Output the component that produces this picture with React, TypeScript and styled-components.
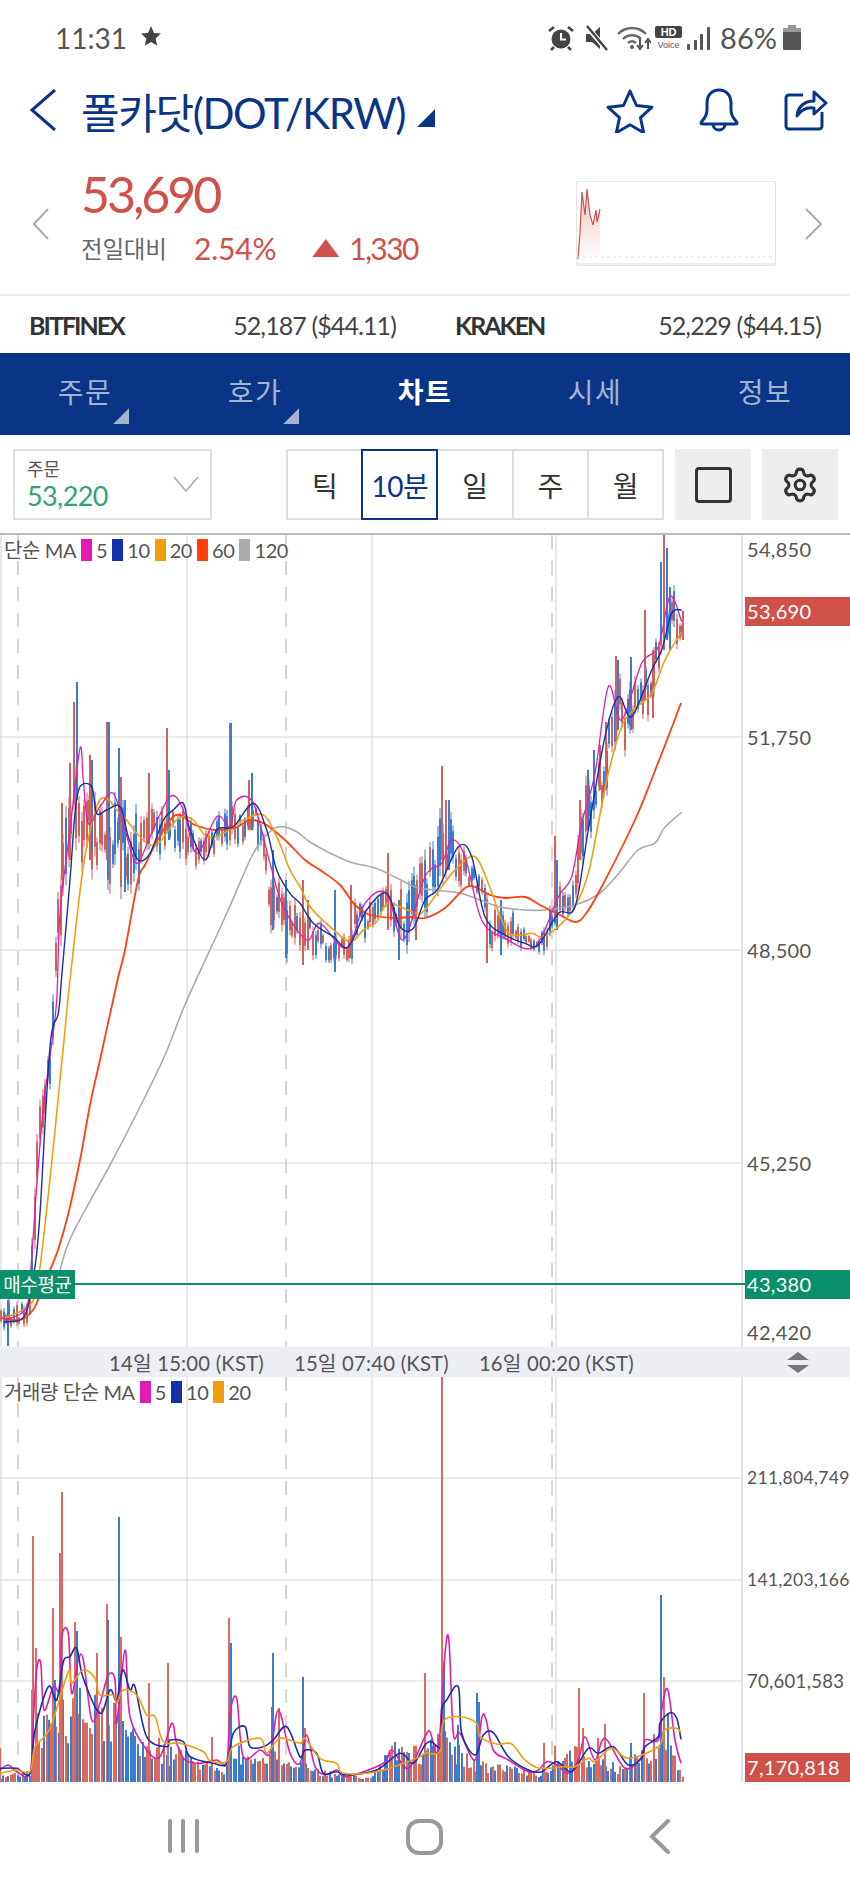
import styled, { createGlobalStyle } from 'styled-components';
import { Settings } from 'lucide-react';

const NAVY = '#0a3587';
const RED = '#d0504a';
const GREEN = '#0a8f6b';
const FONT = `Lato, "Noto Sans CJK KR", sans-serif`;

const MA5 = '#e01cb4';
const MA10 = '#1530a8';
const MA20 = '#f09f0c';
const MA60 = '#ff3f0c';
const MA120 = '#aaaaaa';
const CANDLE_RED = '#cf625c';
const CANDLE_BLUE = '#3a7ccf';

type Pt = [number, number];

// 고정 시드 난수 (렌더마다 같은 차트)
function makeRandom(seed: number) {
  let s = seed;
  return () => {
    s = (s * 1664525 + 1013904223) % 4294967296;
    return s / 4294967296;
  };
}

function lerp(table: number[][], x: number, col: number) {
  for (let i = 1; i < table.length; i++) {
    if (x <= table[i][0]) {
      const a = table[i - 1];
      const b = table[i];
      const t = (x - a[0]) / (b[0] - a[0] || 1);
      return a[col] + (b[col] - a[col]) * t;
    }
  }
  return table[table.length - 1][col];
}

function smooth(points: Pt[]) {
  let d = `M${points[0][0]} ${points[0][1]}`;
  for (let i = 0; i < points.length - 1; i++) {
    const p0 = points[i - 1] || points[i];
    const p1 = points[i];
    const p2 = points[i + 1];
    const p3 = points[i + 2] || p2;
    const c1x = p1[0] + (p2[0] - p0[0]) / 6;
    const c1y = p1[1] + (p2[1] - p0[1]) / 6;
    const c2x = p2[0] - (p3[0] - p1[0]) / 6;
    const c2y = p2[1] - (p3[1] - p1[1]) / 6;
    d += ` C${c1x.toFixed(1)} ${c1y.toFixed(1)} ${c2x.toFixed(1)} ${c2y.toFixed(1)} ${p2[0].toFixed(1)} ${p2[1].toFixed(1)}`;
  }
  return d;
}

// 확대 캡처에서 읽은 좌표를 전체 화면 좌표로 변환
const crop = (ox: number, oy: number, list: number[][]): Pt[] => list.map(([x, y]) => [ox + x / 3, oy + y / 3]);

const PRICE_ENV = [
  [0, 1305, 1335], [30, 1300, 1325], [33, 1190, 1290], [37, 1120, 1190], [45, 1080, 1130], [51, 1025, 1080],
  [54, 950, 1010], [60, 860, 950], [65, 800, 900], [72, 770, 860], [80, 770, 870], [90, 780, 870], [97, 810, 870],
  [110, 800, 880], [120, 790, 880], [128, 810, 890], [137, 820, 890], [150, 810, 860], [165, 800, 850],
  [180, 805, 855], [195, 830, 870], [205, 840, 870], [212, 815, 860], [230, 800, 850], [245, 810, 840],
  [255, 800, 830], [262, 820, 870], [270, 860, 920], [285, 880, 950], [305, 905, 950], [335, 940, 965],
  [350, 930, 960], [355, 900, 950], [370, 900, 930], [388, 880, 920], [400, 890, 950], [420, 860, 930],
  [435, 820, 900], [445, 810, 880], [460, 840, 880], [470, 860, 890], [482, 870, 900], [490, 910, 950],
  [510, 910, 945], [520, 925, 950], [535, 940, 955], [550, 905, 945], [558, 880, 920], [570, 890, 920],
  [578, 830, 900], [585, 790, 860], [595, 760, 830], [605, 740, 800], [612, 700, 770], [618, 670, 740],
  [625, 690, 750], [640, 680, 730], [650, 650, 710], [660, 610, 680], [667, 590, 650], [672, 590, 640], [682, 615, 640],
];

const PRICE_SPIKES: [number, number, number, string][] = [
  [8, 1300, 1346, 'b'], [77, 682, 800, 'b'], [74, 702, 800, 'r'], [62, 803, 880, 'r'], [70, 763, 860, 'r'], [90, 755, 860, 'r'],
  [92, 760, 850, 'b'], [107, 722, 860, 'r'], [109, 722, 840, 'b'], [119, 748, 840, 'b'], [125, 800, 892, 'b'],
  [121, 777, 870, 'r'], [149, 773, 840, 'r'], [167, 728, 830, 'r'], [169, 770, 840, 'b'], [230, 723, 840, 'r'],
  [231, 723, 820, 'b'], [252, 773, 830, 'b'], [249, 780, 830, 'r'], [273, 850, 930, 'b'], [286, 880, 958, 'b'],
  [303, 880, 965, 'r'], [308, 900, 950, 'r'], [335, 890, 972, 'b'], [351, 885, 958, 'r'], [388, 853, 930, 'r'],
  [399, 900, 960, 'b'], [416, 885, 940, 'r'], [442, 766, 860, 'r'], [446, 800, 870, 'r'], [449, 800, 870, 'b'],
  [487, 900, 963, 'r'], [501, 900, 955, 'b'], [555, 836, 920, 'r'], [557, 860, 930, 'b'], [580, 800, 860, 'r'],
  [588, 770, 830, 'b'], [594, 750, 810, 'b'], [600, 745, 790, 'r'], [625, 720, 750, 'r'], [631, 657, 730, 'b'],
  [645, 610, 700, 'r'], [653, 650, 718, 'r'], [661, 562, 640, 'b'], [664, 535, 650, 'r'], [667, 548, 640, 'b'],
  [670, 587, 650, 'b'], [683, 611, 640, 'r'], [606, 722, 790, 'r'], [616, 656, 740, 'r'], [618, 660, 730, 'b'],
];

const VOLUME_ENV = [
  [0, 1775], [30, 1772], [33, 1720], [60, 1705], [75, 1695], [120, 1712], [165, 1745], [225, 1770], [230, 1745],
  [265, 1760], [275, 1750], [315, 1770], [370, 1778], [385, 1750], [400, 1745], [425, 1750], [445, 1730], [470, 1760],
  [540, 1772], [575, 1750], [620, 1765], [640, 1750], [665, 1730], [676, 1760], [682, 1775],
];

const VOLUME_SPIKES: [number, number, string][] = [
  [0, 1748, 'r'], [33, 1536, 'r'], [36, 1648, 'r'], [32, 1690, 'r'], [53, 1608, 'r'], [62, 1492, 'r'], [60, 1553, 'r'],
  [55, 1680, 'b'], [75, 1622, 'r'], [77, 1631, 'b'], [97, 1653, 'r'], [107, 1604, 'r'], [108, 1620, 'b'], [119, 1517, 'b'],
  [121, 1637, 'r'], [149, 1683, 'r'], [168, 1663, 'r'], [212, 1737, 'r'], [229, 1618, 'r'], [231, 1643, 'b'], [273, 1653, 'b'],
  [272, 1707, 'b'], [279, 1708, 'r'], [303, 1677, 'b'], [305, 1728, 'r'], [425, 1673, 'r'], [442, 1377, 'r'], [444, 1663, 'b'],
  [458, 1725, 'b'], [477, 1693, 'b'], [479, 1702, 'b'], [544, 1743, 'r'], [555, 1746, 'r'], [579, 1688, 'r'], [583, 1728, 'r'],
  [605, 1724, 'r'], [598, 1738, 'r'], [631, 1743, 'b'], [644, 1693, 'r'], [661, 1595, 'b'], [664, 1677, 'r'], [668, 1713, 'b'],
];

type Candle = { x: number; hi: number; lo: number; top: number; bottom: number; color: string };

function buildCandles() {
  const rand = makeRandom(77);
  const list: Candle[] = [];
  for (let x = 1; x < 683; x += 2.6) {
    const envHi = lerp(PRICE_ENV, x, 1);
    const envLo = lerp(PRICE_ENV, x, 2);
    const range = envLo - envHi;
    const center = (envHi + envLo) / 2 + (rand() - 0.5) * range * 0.55;
    const half = range * (0.14 + rand() * 0.34);
    list.push({
      x: Math.round(x),
      hi: center - half,
      lo: center + half,
      top: center - half * 0.7,
      bottom: center + half * 0.7,
      color: rand() > 0.5 ? CANDLE_RED : CANDLE_BLUE,
    });
  }
  return list;
}

function buildVolume() {
  const rand = makeRandom(2021);
  const list: { x: number; top: number; color: string }[] = [];
  for (let x = 1; x < 683; x += 2.4) {
    const env = lerp(VOLUME_ENV, x, 1);
    list.push({
      x: Math.round(x),
      top: 1782 - (1782 - env) * (0.45 + rand() * 0.7),
      color: rand() > 0.5 ? '#d96a5e' : CANDLE_BLUE,
    });
  }
  return list;
}

const CANDLES = buildCandles();
const VOLUME = buildVolume();

const PRICE_MA: { color: string; width: number; points: Pt[] }[] = [
  {
    color: MA120,
    width: 1.6,
    points: [
      [60, 1270], [72, 1235], [110, 1165], [137, 1113], [165, 1055], [187, 1000], [226, 915], [250, 860], [262, 840],
      [275, 828], [285, 827], [297, 832], [310, 842], [330, 853], [350, 862], [375, 868], [395, 877], [415, 887],
      [433, 890], [460, 893], [480, 900], [500, 907], [525, 910], [545, 910], [575, 905], [600, 893], [620, 872],
      [638, 850], [655, 843], [665, 827], [682, 812],
    ],
  },
  {
    color: MA60,
    width: 1.8,
    points: [
      [2, 1318], [20, 1320], [33, 1310], [40, 1295], [50, 1270], [58, 1250], [68, 1215], [80, 1160], [90, 1105], [100, 1060],
      [118, 978], [125, 950], [138, 880], [145, 865], [155, 845], [170, 820], [180, 815], [195, 825], [215, 830], [235, 828],
      [250, 820], [265, 824], [285, 840], [305, 860], [320, 870], [340, 885], [355, 905], [370, 915], [395, 918], [410, 917],
      [425, 918], [445, 908], [465, 888], [475, 887], [490, 895], [505, 898], [525, 897], [540, 905], [560, 915], [575, 922],
      [585, 915], [600, 890], [635, 820], [658, 763], [672, 727], [681, 703],
    ],
  },
  {
    color: MA20,
    width: 1.6,
    points: [
      [5, 1318], [30, 1305], [38, 1280], [45, 1225], [52, 1160], [58, 1100], [65, 1030], [70, 980],
      ...crop(0, 530, [
        [250, 1010], [290, 830], [320, 805], [350, 840], [380, 870], [410, 910], [450, 945], [480, 935], [520, 880], [545, 860],
        [580, 870], [620, 920], [670, 910], [730, 870], [790, 855], [830, 920], [870, 1020], [900, 1070], [930, 1130], [990, 1190],
        [1050, 1235], [1090, 1200], [1130, 1175], [1160, 1120], [1200, 1130], [1250, 1150],
      ]),
      ...crop(425, 530, [
        [0, 1140], [50, 1070], [100, 1010], [150, 980], [190, 1060], [230, 1170], [260, 1215], [320, 1210], [350, 1220],
        [400, 1190], [450, 1130], [490, 1030], [520, 880], [550, 730], [590, 590], [630, 535], [680, 490], [720, 390], [770, 305],
      ]),
    ],
  },
  {
    color: MA5,
    width: 1.3,
    points: [
      [4, 1320], [25, 1310],
      ...crop(0, 980, [[90, 900], [110, 620], [130, 380], [150, 230], [170, 60]]),
      ...crop(0, 530, [
        [180, 1150], [210, 900], [240, 655], [250, 750], [265, 880], [300, 830], [340, 790], [375, 900], [410, 1000], [450, 920],
        [510, 800], [550, 840], [590, 970], [650, 860], [690, 890], [710, 810], [760, 820], [810, 1000], [850, 1130], [920, 1230],
        [960, 1180], [1040, 1255], [1095, 1120], [1160, 1090], [1210, 1230],
      ]),
      ...crop(425, 530, [
        [0, 1040], [50, 1000], [80, 930], [120, 980], [170, 1170], [240, 1225], [330, 1250], [400, 1100], [440, 1040], [470, 880],
        [510, 730], [550, 470], [590, 570], [650, 400], [700, 350], [735, 200], [770, 275],
      ]),
    ],
  },
  {
    color: MA10,
    width: 1.4,
    points: [
      [4, 1322], [25, 1315],
      ...crop(0, 980, [[105, 860], [120, 700], [150, 200], [175, 100]]),
      ...crop(0, 530, [
        [185, 1340], [210, 1050], [225, 850], [240, 770], [275, 770], [290, 850], [320, 840], [360, 830], [385, 920], [415, 990],
        [450, 970], [490, 870], [520, 840], [550, 820], [570, 900], [615, 990], [650, 900], [700, 890], [760, 820], [800, 900],
        [830, 1020], [870, 1090], [900, 1120], [940, 1180], [1000, 1220], [1045, 1250], [1100, 1140], [1160, 1090], [1200, 1190], [1240, 1195],
      ]),
      ...crop(425, 530, [
        [0, 1110], [40, 1075], [100, 950], [140, 980], [180, 1160], [240, 1215], [300, 1240], [340, 1245], [400, 1150], [450, 1130],
        [490, 900], [540, 620], [580, 500], [620, 560], [680, 420], [710, 360], [740, 250], [770, 240],
      ]),
    ],
  },
];

const VOLUME_MA: { color: string; points: Pt[] }[] = [
  {
    color: MA5,
    points: [
      ...crop(0, 1370, [
        [0, 1200], [25, 1185], [50, 1205], [90, 1210], [100, 1050], [110, 900], [122, 878], [132, 1020], [160, 950], [180, 960],
        [185, 800], [205, 790], [215, 970], [235, 870], [250, 870], [275, 1050], [300, 1000], [325, 915], [345, 930], [350, 1060],
        [375, 840], [390, 1040], [440, 1140], [480, 1160], [515, 1060], [530, 1120], [555, 1170], [600, 1180], [650, 1170], [680, 1180],
        [690, 1030], [710, 985], [730, 1160], [780, 1140], [810, 1150], [835, 1020], [870, 1150], [900, 1180], [920, 1095], [945, 1190],
        [975, 1215], [1010, 1200], [1040, 1220], [1150, 1180], [1175, 1140], [1225, 1195],
      ]),
      ...crop(425, 1370, [
        [0, 1100], [15, 1085], [40, 1140], [60, 850], [72, 815], [85, 1090], [105, 1090], [150, 1170], [170, 1045], [182, 1045],
        [205, 1140], [250, 1170], [310, 1205], [340, 1200], [365, 1175], [395, 1185], [430, 1210], [460, 1170], [480, 1100], [510, 1170],
        [540, 1105], [600, 1195], [650, 1160], [660, 1110], [700, 1110], [710, 1020], [728, 958], [750, 1110], [768, 1180],
      ]),
    ],
  },
  {
    color: MA10,
    points: [
      ...crop(0, 1370, [
        [0, 1195], [50, 1195], [90, 1210], [105, 1080], [145, 950], [170, 990], [190, 875], [210, 860], [230, 835], [250, 925],
        [300, 1030], [330, 960], [350, 990], [368, 900], [390, 960], [405, 950], [440, 1100], [500, 1130], [510, 1110], [550, 1115],
        [570, 1160], [640, 1180], [680, 1180], [700, 1090], [735, 1070], [750, 1130], [790, 1130], [820, 1110], [860, 1070], [900, 1160],
        [915, 1140], [950, 1150], [970, 1210], [1010, 1205], [1040, 1215], [1130, 1200], [1200, 1150], [1240, 1180],
      ]),
      ...crop(425, 1370, [
        [0, 1125], [20, 1115], [48, 1130], [50, 1020], [65, 990], [100, 950], [110, 1090], [150, 1155], [175, 1095], [205, 1088],
        [250, 1160], [310, 1200], [350, 1205], [395, 1175], [440, 1205], [490, 1135], [520, 1150], [565, 1130], [610, 1185], [650, 1165],
        [660, 1130], [700, 1100], [705, 1060], [735, 1028], [755, 1045], [768, 1108],
      ]),
    ],
  },
  {
    color: MA20,
    points: [
      ...crop(0, 1370, [
        [0, 1210], [50, 1200], [90, 1205], [105, 1130], [150, 1075], [205, 905], [215, 940], [250, 900], [285, 925], [300, 975],
        [340, 975], [350, 1000], [370, 960], [410, 975], [440, 1035], [465, 1040], [490, 1115], [540, 1120], [610, 1145], [630, 1172],
        [680, 1175], [700, 1130], [780, 1105], [800, 1150], [840, 1105], [900, 1120], [915, 1105], [960, 1165], [1010, 1180], [1030, 1210],
        [1130, 1205], [1250, 1165],
      ]),
      ...crop(425, 1370, [
        [0, 1150], [45, 1145], [55, 1055], [105, 1040], [155, 1060], [165, 1100], [215, 1122], [260, 1122], [300, 1170], [345, 1195],
        [420, 1190], [450, 1190], [490, 1165], [510, 1175], [560, 1135], [610, 1165], [700, 1130], [720, 1080], [755, 1075], [768, 1088],
      ]),
    ],
  },
];

const GlobalStyle = createGlobalStyle`
  html, body {
    margin: 0;
    padding: 0;
    background: #fff;
  }
  * {
    box-sizing: border-box;
  }
`;

const Page = styled.div`
  width: 850px;
  height: 1889px;
  overflow: hidden;
  background: #fff;
  display: flex;
  flex-direction: column;
  font-family: ${FONT};
`;

const StatusBar = styled.div`
  height: 62px;
  padding: 13px 49px 0 55px;
  display: flex;
  align-items: center;
  justify-content: space-between;
  color: #555;
`;

const StatusGroup = styled.div`
  display: flex;
  align-items: center;
`;

const Clock = styled.span`
  font-size: 28px;
  width: 85px;
  color: #555;
`;

const HdBadge = styled.div`
  width: 27px;
  margin: 0 5px 0 4px;
  display: flex;
  flex-direction: column;
  align-items: center;
  gap: 2px;
`;

const HdText = styled.span`
  width: 27px;
  height: 12px;
  line-height: 12px;
  border-radius: 2px;
  background: #444;
  color: #fff;
  font: bold 11px 'Liberation Sans', sans-serif;
  text-align: center;
`;

const VoiceText = styled.span`
  font: 9px/10px 'Liberation Sans', sans-serif;
  color: #555;
`;

const Battery = styled.span`
  font-size: 29px;
  margin: 0 6px 0 10px;
  color: #555;
`;

const Header = styled.header`
  height: 90px;
  padding: 6px 22px 0 29px;
  display: flex;
  align-items: center;
`;

const Title = styled.h1`
  margin: 0 0 0 24px;
  font-size: 42px;
  font-weight: 400;
  color: ${NAVY};
  letter-spacing: -1.4px;
  white-space: nowrap;
`;

const TitleMark = styled.span`
  width: 18px;
  height: 18px;
  margin: 16px 0 0 12px;
  background: ${NAVY};
  clip-path: polygon(100% 0, 100% 100%, 0 100%);
`;

const HeaderActions = styled.div`
  margin-left: auto;
  display: flex;
  align-items: center;
  gap: 43px;
`;

const PriceRow = styled.section`
  height: 144px;
  padding: 28px 28px 0 33px;
  display: flex;
  align-items: flex-start;
  border-bottom: 2px solid #eee;
`;

const PriceChevron = styled.svg`
  margin-top: 28px;
  flex: none;
`;

const PriceCol = styled.div`
  margin-left: 32px;
  display: flex;
  flex-direction: column;
`;

const BigPrice = styled.div`
  font-size: 50px;
  line-height: 52px;
  margin-top: -12px;
  color: ${RED};
  letter-spacing: -3px;
`;

const ChangeRow = styled.div`
  display: flex;
  align-items: center;
  margin-top: 10px;
`;

const ChangeLabel = styled.span`
  width: 113px;
  font-size: 23.5px;
  color: #666;
  letter-spacing: -0.2px;
`;

const ChangeValue = styled.span<{ $tight?: boolean }>`
  font-size: 30px;
  line-height: 36px;
  color: ${RED};
  letter-spacing: ${(p) => (p.$tight ? -1.6 : -0.2)}px;
`;

const UpMark = styled.span`
  width: 27px;
  height: 18px;
  margin: 0 10px 0 36px;
  background: ${RED};
  clip-path: polygon(50% 0, 100% 100%, 0 100%);
`;

const Spark = styled.svg`
  margin: 1px 29px 0 auto;
  flex: none;
  border: 1px solid #e6e6e6;
`;

const ExchangeRow = styled.section`
  height: 57px;
  padding: 0 29px;
  display: grid;
  grid-template-columns: 367px 366px;
  column-gap: 59px;
  align-items: center;
`;

const ExchangeCell = styled.div`
  display: flex;
  justify-content: space-between;
  align-items: center;
`;

const ExchangeName = styled.span`
  font-size: 25px;
  font-weight: 700;
  color: #333;
  letter-spacing: -2px;
`;

const ExchangeValue = styled.span`
  font-size: 25px;
  color: #444;
  letter-spacing: -0.9px;
`;

const Tabs = styled.nav`
  height: 82px;
  background: ${NAVY};
  display: grid;
  grid-template-columns: repeat(5, 1fr);
  justify-items: center;
  align-items: center;
`;

const Tab = styled.span<{ $active?: boolean; $menu?: boolean }>`
  position: relative;
  top: -3px;
  font-size: 28px;
  font-weight: ${(p) => (p.$active ? 700 : 400)};
  color: ${(p) => (p.$active ? '#fff' : '#a3b3d6')};
  letter-spacing: 1.5px;
  &::after {
    content: '';
    display: ${(p) => (p.$menu ? 'block' : 'none')};
    position: absolute;
    right: -17px;
    bottom: -13px;
    width: 16px;
    height: 16px;
    background: #a3b3d6;
    clip-path: polygon(100% 0, 100% 100%, 0 100%);
  }
`;

const Toolbar = styled.section`
  height: 98px;
  padding: 14px 12px 0 13px;
  display: flex;
  align-items: flex-start;
`;

const OrderSelect = styled.div`
  position: relative;
  width: 199px;
  height: 71px;
  padding: 6px 12px;
  border: 2px solid #ddd;
  display: flex;
  flex-direction: column;
`;

const OrderLabel = styled.span`
  font-size: 18px;
  line-height: 24px;
  color: #555;
`;

const OrderPrice = styled.span`
  font-size: 27px;
  line-height: 30px;
  color: #2fa37c;
  letter-spacing: -0.6px;
`;

const OrderChevron = styled.svg`
  position: absolute;
  right: 11px;
  top: 25px;
`;

const PeriodGroup = styled.div`
  width: 376px;
  height: 71px;
  margin-left: 76px;
  display: grid;
  grid-template-columns: repeat(5, 1fr);
`;

const PeriodButton = styled.div<{ $active?: boolean }>`
  margin-left: -2px;
  border: 2px solid ${(p) => (p.$active ? NAVY : '#ddd')};
  position: relative;
  z-index: ${(p) => (p.$active ? 1 : 0)};
  display: flex;
  align-items: center;
  justify-content: center;
  font-size: 28px;
  color: ${(p) => (p.$active ? NAVY : '#333')};
  letter-spacing: -0.5px;
`;

const ToolButton = styled.div`
  width: 76px;
  height: 71px;
  margin-left: 11px;
  background: #eee;
  display: flex;
  align-items: center;
  justify-content: center;
`;

const SquareIcon = styled.span`
  width: 37px;
  height: 36px;
  border: 3px solid #333;
  border-radius: 4px;
`;

const ChartPanel = styled.section`
  position: relative;
  height: 814px;
  border-top: 2px solid #bbb;
`;

const VolumePanel = styled.section`
  position: relative;
  height: 405px;
`;

const ChartSvg = styled.svg`
  display: block;
`;

const Legend = styled.div`
  position: absolute;
  left: 4px;
  top: 3px;
  display: flex;
  align-items: center;
  gap: 4px;
  font-size: 20px;
  line-height: 24px;
  color: #555;
  letter-spacing: -0.4px;
`;

const LegendSwatch = styled.span<{ $color: string }>`
  width: 11px;
  height: 22px;
  margin-left: 1px;
  background: ${(p) => p.$color};
`;

const AxisLabel = styled.span<{ $y: number; $size?: number }>`
  position: absolute;
  left: 747px;
  top: ${(p) => p.$y - 14}px;
  line-height: 28px;
  font-size: ${(p) => p.$size || 20}px;
  color: #555;
  white-space: nowrap;
  letter-spacing: 0.3px;
`;

const ValueTag = styled.span<{ $y: number; $bg: string }>`
  position: absolute;
  left: 745px;
  right: 0;
  top: ${(p) => p.$y}px;
  height: 29px;
  padding-left: 2px;
  line-height: 29px;
  font-size: 20px;
  background: ${(p) => p.$bg};
  color: #fff;
  letter-spacing: 0.3px;
`;

const AvgTag = styled.span`
  position: absolute;
  left: 0;
  top: 735px;
  width: 75px;
  height: 29px;
  line-height: 29px;
  text-align: center;
  font-size: 19px;
  letter-spacing: -0.4px;
  background: ${GREEN};
  color: #fff;
  white-space: nowrap;
`;

const TimeAxis = styled.div`
  position: relative;
  height: 30px;
  background: #eceef3;
  display: flex;
  align-items: center;
  font-size: 20.3px;
  color: #555;
  padding-left: 109px;
  gap: 30px;
  letter-spacing: 0.2px;
`;

const SortIcon = styled.svg`
  position: absolute;
  left: 786px;
  top: 5px;
`;

const BottomNav = styled.footer`
  flex: 1;
  padding: 37px 180px 0 168px;
  display: flex;
  justify-content: space-between;
  align-items: flex-start;
`;

function AlarmIcon() {
  return (
    <svg width="28" height="26" viewBox="0 0 28 26" fill="none">
      <circle cx="14" cy="14" r="9.5" fill="#444" />
      <path d="M14 8v6.5h5" stroke="#fff" strokeWidth="2" />
      <path d="M2 6l5-4M26 6l-5-4M7 22l-3 3M21 22l3 3" stroke="#444" strokeWidth="2.6" />
    </svg>
  );
}

function MuteIcon() {
  return (
    <svg width="24" height="26" viewBox="0 0 24 26" fill="none" style={{ marginLeft: 10 }}>
      <path d="M1 9h6l8-7v22l-8-7H1z" fill="#444" />
      <path d="M2 2l20 23" stroke="#fff" strokeWidth="5" />
      <path d="M2 1l20 24" stroke="#444" strokeWidth="2.4" />
    </svg>
  );
}

function WifiIcon() {
  return (
    <svg width="34" height="26" viewBox="0 0 34 26" fill="none" style={{ marginLeft: 8 }}>
      <path d="M1 9c8-8 20-8 28 0" stroke="#666" strokeWidth="2.4" />
      <path d="M6 14c5-5 13-5 18 0" stroke="#666" strokeWidth="2.4" />
      <path d="M11 18c2.500-2.200 5.500-2.200 8 0" stroke="#666" strokeWidth="2.400" />
      <circle cx="15" cy="22" r="2" fill="#555" />
      <path d="M23 14v9m-3-3l3 4 3-4" stroke="#555" strokeWidth="2" />
      <path d="M31 24v-9m-3 3l3-4 3 4" stroke="#555" strokeWidth="2" />
    </svg>
  );
}

function SignalIcon() {
  return (
    <svg width="23" height="24" viewBox="0 0 23 24" fill="#555">
      <rect x="0" y="18" width="3" height="6" rx="1" />
      <rect x="7" y="14" width="3" height="10" rx="1" />
      <rect x="13" y="8" width="3" height="16" rx="1" />
      <rect x="20" y="1" width="3" height="23" rx="1" />
    </svg>
  );
}

function BatteryIcon() {
  return (
    <svg width="18" height="25" viewBox="0 0 18 25">
      <rect x="5" y="0" width="8" height="4" fill="#999" />
      <rect x="0" y="3" width="18" height="5" rx="1" fill="#999" />
      <rect x="0" y="7" width="18" height="18" rx="1" fill="#555" />
    </svg>
  );
}

function StarBlack() {
  return (
    <svg width="22" height="20" viewBox="0 0 22 20" fill="#444" style={{ marginTop: -4 }}>
      <path d="M11 0l3 7 7 .6-5.400 4.800 1.700 7.300L11 16l-6.300 3.700 1.700-7.300L1 7.600 8 7z" />
    </svg>
  );
}

function Chevron({ dir, size, color, weight }: { dir: 'l' | 'r'; size: [number, number]; color: string; weight: number }) {
  const [w, h] = size;
  const d = dir === 'l' ? `M${w - 1} 1L1 ${h / 2}L${w - 1} ${h - 1}` : `M1 1L${w - 1} ${h / 2}L1 ${h - 1}`;
  return (
    <PriceChevron width={w} height={h} viewBox={`0 0 ${w} ${h}`} fill="none">
      <path d={d} stroke={color} strokeWidth={weight} />
    </PriceChevron>
  );
}

function StarOutline() {
  return (
    <svg width="48" height="45" viewBox="0 0 48 45" fill="none">
      <path
        d="M24 3l6.500 14.500 15.500 1.700-11.500 10.500 3.200 15-13.700-7.900-13.700 7.900 3.200-15L2 19.200l15.500-1.700z"
        stroke={NAVY}
        strokeWidth="3"
        strokeLinejoin="round"
      />
    </svg>
  );
}

function BellOutline() {
  return (
    <svg width="44" height="44" viewBox="0 0 42 44" fill="none">
      <path
        d="M3 35c0-2 6-5 6-13v-7C9 7 14 2 21 2s12 5 12 13v7c0 8 6 11 6 13 0 1-1 1-2 1H5c-1 0-2 0-2-1z"
        stroke={NAVY}
        strokeWidth="3"
        strokeLinejoin="round"
      />
      <path d="M15 36c0 8 12 8 12 0" stroke={NAVY} strokeWidth="3" />
    </svg>
  );
}

function ShareOutline() {
  return (
    <svg width="44" height="42" viewBox="0 0 44 42" fill="none">
      <path d="M19 6H5a3 3 0 0 0-3 3v28a3 3 0 0 0 3 3h30a3 3 0 0 0 3-3V23" stroke={NAVY} strokeWidth="3" />
      <path d="M13 27c1-10 8-15 17-15V3l12 11-12 11v-6c-7-1-13 2-17 8z" stroke={NAVY} strokeWidth="3" strokeLinejoin="round" />
    </svg>
  );
}

function MiniChart() {
  const pts: Pt[] = [[1, 77], [3, 50], [5, 10], [8, 33], [10, 7], [13, 33], [16, 43], [19, 28], [20, 40], [23, 27]];
  const line = pts.map((p) => p.join(',')).join(' ');
  return (
    <Spark width="200" height="85" viewBox="0 0 198 83">
      <defs>
        <linearGradient id="sparkFill" x1="0" y1="0" x2="0" y2="1">
          <stop offset="0" stopColor={RED} stopOpacity="0.35" />
          <stop offset="1" stopColor={RED} stopOpacity="0" />
        </linearGradient>
      </defs>
      <polygon points={`${line} 23,74 1,74`} fill="url(#sparkFill)" />
      <polyline points={line} fill="none" stroke={RED} strokeWidth="1.2" />
      <line x1="0" y1="75" x2="198" y2="75" stroke="#ddd" strokeWidth="1" strokeDasharray="3 3" />
      <line x1="0" y1="82" x2="198" y2="82" stroke="#eee" strokeWidth="2" />
    </Spark>
  );
}

function GridLines({ rows, bottom, top }: { rows: number[]; bottom: number; top: number }) {
  return (
    <>
      {rows.map((y) => (
        <line key={y} x1="0" x2="742" y1={y} y2={y} stroke="#e4e4e4" strokeWidth="1.4" />
      ))}
      {[187, 372, 556].map((x) => (
        <line key={x} x1={x} x2={x} y1={top} y2={bottom} stroke="#d8d8d8" strokeWidth="1.2" />
      ))}
      {[18, 286, 552].map((x) => (
        <line key={x} x1={x} x2={x} y1={top} y2={bottom} stroke="#d6d6d6" strokeWidth="2" strokeDasharray="14 12" />
      ))}
      <line x1="1" x2="1" y1={top} y2={bottom} stroke="#d8d8d8" strokeWidth="1.2" />
      <line x1="742" x2="742" y1={top} y2={bottom} stroke="#d8d8d8" strokeWidth="1.4" />
    </>
  );
}

function PriceChart() {
  return (
    <ChartSvg width="850" height="812" viewBox="0 535 850 812">
      <GridLines rows={[737, 950, 1163]} top={535} bottom={1347} />
      {CANDLES.map((c) => (
        <g key={c.x} stroke={c.color}>
          <line x1={c.x} x2={c.x} y1={c.hi} y2={c.lo} strokeWidth="1" />
          <line x1={c.x} x2={c.x} y1={c.top} y2={c.bottom} strokeWidth="2" />
        </g>
      ))}
      {PRICE_SPIKES.map(([x, top, bottom, kind]) => (
        <line key={`${x}-${top}`} x1={x} x2={x} y1={top} y2={bottom} stroke={kind === 'r' ? CANDLE_RED : CANDLE_BLUE} strokeWidth="2" />
      ))}
      {PRICE_MA.map((m) => (
        <path key={m.color} d={smooth(m.points)} fill="none" stroke={m.color} strokeWidth={m.width} />
      ))}
      <line x1="0" x2="745" y1="1284" y2="1284" stroke={GREEN} strokeWidth="1.8" />
    </ChartSvg>
  );
}

function VolumeChart() {
  return (
    <ChartSvg width="850" height="405" viewBox="0 1377 850 405">
      <GridLines rows={[1478, 1580, 1681]} top={1377} bottom={1782} />
      {VOLUME.map((b) => (
        <line key={b.x} x1={b.x} x2={b.x} y1={b.top} y2="1782" stroke={b.color} strokeWidth="2" />
      ))}
      {VOLUME_SPIKES.map(([x, top, kind]) => (
        <line key={`${x}-${top}`} x1={x} x2={x} y1={top} y2="1782" stroke={kind === 'r' ? '#dc6a60' : CANDLE_BLUE} strokeWidth="2" />
      ))}
      {VOLUME_MA.map((m) => (
        <path key={m.color} d={smooth(m.points)} fill="none" stroke={m.color} strokeWidth="1.6" />
      ))}
    </ChartSvg>
  );
}

export default function App() {
  return (
    <Page>
      <GlobalStyle />
      <StatusBar>
        <StatusGroup>
          <Clock>11:31</Clock>
          <StarBlack />
        </StatusGroup>
        <StatusGroup>
          <AlarmIcon />
          <MuteIcon />
          <WifiIcon />
          <HdBadge>
            <HdText>HD</HdText>
            <VoiceText>Voice</VoiceText>
          </HdBadge>
          <SignalIcon />
          <Battery>86%</Battery>
          <BatteryIcon />
        </StatusGroup>
      </StatusBar>

      <Header>
        <svg width="28" height="44" viewBox="0 0 28 44" fill="none">
          <path d="M26 2L3 22l23 20" stroke={NAVY} strokeWidth="3" />
        </svg>
        <Title>폴카닷(DOT/KRW)</Title>
        <TitleMark />
        <HeaderActions>
          <StarOutline />
          <BellOutline />
          <ShareOutline />
        </HeaderActions>
      </Header>

      <PriceRow>
        <Chevron dir="l" size={[16, 32]} color="#aaa" weight={2} />
        <PriceCol>
          <BigPrice>53,690</BigPrice>
          <ChangeRow>
            <ChangeLabel>전일대비</ChangeLabel>
            <ChangeValue>2.54%</ChangeValue>
            <UpMark />
            <ChangeValue $tight>1,330</ChangeValue>
          </ChangeRow>
        </PriceCol>
        <MiniChart />
        <Chevron dir="r" size={[17, 32]} color="#aaa" weight={2} />
      </PriceRow>

      <ExchangeRow>
        <ExchangeCell>
          <ExchangeName>BITFINEX</ExchangeName>
          <ExchangeValue>52,187 ($44.11)</ExchangeValue>
        </ExchangeCell>
        <ExchangeCell>
          <ExchangeName>KRAKEN</ExchangeName>
          <ExchangeValue>52,229 ($44.15)</ExchangeValue>
        </ExchangeCell>
      </ExchangeRow>

      <Tabs>
        <Tab $menu>주문</Tab>
        <Tab $menu>호가</Tab>
        <Tab $active>차트</Tab>
        <Tab>시세</Tab>
        <Tab>정보</Tab>
      </Tabs>

      <Toolbar>
        <OrderSelect>
          <OrderLabel>주문</OrderLabel>
          <OrderPrice>53,220</OrderPrice>
          <OrderChevron width="26" height="16" viewBox="0 0 26 16" fill="none">
            <path d="M1 1l12 14L25 1" stroke="#aaa" strokeWidth="1.6" />
          </OrderChevron>
        </OrderSelect>
        <PeriodGroup>
          <PeriodButton>틱</PeriodButton>
          <PeriodButton $active>10분</PeriodButton>
          <PeriodButton>일</PeriodButton>
          <PeriodButton>주</PeriodButton>
          <PeriodButton>월</PeriodButton>
        </PeriodGroup>
        <ToolButton>
          <SquareIcon />
        </ToolButton>
        <ToolButton>
          <Settings size={38} color="#333" strokeWidth={2} />
        </ToolButton>
      </Toolbar>

      <ChartPanel>
        <PriceChart />
        <Legend>
          단순 MA
          <LegendSwatch $color={MA5} />5
          <LegendSwatch $color={MA10} />10
          <LegendSwatch $color={MA20} />20
          <LegendSwatch $color={MA60} />60
          <LegendSwatch $color={MA120} />120
        </Legend>
        <AxisLabel $y={14}>54,850</AxisLabel>
        <ValueTag $y={62} $bg={RED}>53,690</ValueTag>
        <AxisLabel $y={202}>51,750</AxisLabel>
        <AxisLabel $y={415}>48,500</AxisLabel>
        <AxisLabel $y={628}>45,250</AxisLabel>
        <AvgTag>매수평균</AvgTag>
        <ValueTag $y={735} $bg={GREEN}>43,380</ValueTag>
        <AxisLabel $y={797}>42,420</AxisLabel>
      </ChartPanel>

      <TimeAxis>
        <span>14일 15:00 (KST)</span>
        <span>15일 07:40 (KST)</span>
        <span>16일 00:20 (KST)</span>
        <SortIcon width="24" height="22" viewBox="0 0 24 22" fill="#777">
          <path d="M12 0l11 8H1zM1 13h22l-11 8z" />
        </SortIcon>
      </TimeAxis>

      <VolumePanel>
        <VolumeChart />
        <Legend>
          거래량 단순 MA
          <LegendSwatch $color={MA5} />5
          <LegendSwatch $color={MA10} />10
          <LegendSwatch $color={MA20} />20
        </Legend>
        <AxisLabel $y={101} $size={17.5}>211,804,749</AxisLabel>
        <AxisLabel $y={203} $size={17.5}>141,203,166</AxisLabel>
        <AxisLabel $y={304} $size={18.5}>70,601,583</AxisLabel>
        <ValueTag $y={376} $bg={RED}>7,170,818</ValueTag>
      </VolumePanel>

      <BottomNav>
        <svg width="32" height="34" viewBox="0 0 32 34" fill="none" stroke="#999" strokeWidth="4" strokeLinecap="round">
          <path d="M2 2v30M15 2v30M29 2v30" />
        </svg>
        <svg width="37" height="36" viewBox="0 0 37 36" fill="none">
          <rect x="2" y="2" width="33" height="32" rx="11" stroke="#999" strokeWidth="4" />
        </svg>
        <svg width="21" height="35" viewBox="0 0 21 35" fill="none" stroke="#999" strokeWidth="4" strokeLinecap="round">
          <path d="M19 2L3 17.500 19 33" />
        </svg>
      </BottomNav>
    </Page>
  );
}
